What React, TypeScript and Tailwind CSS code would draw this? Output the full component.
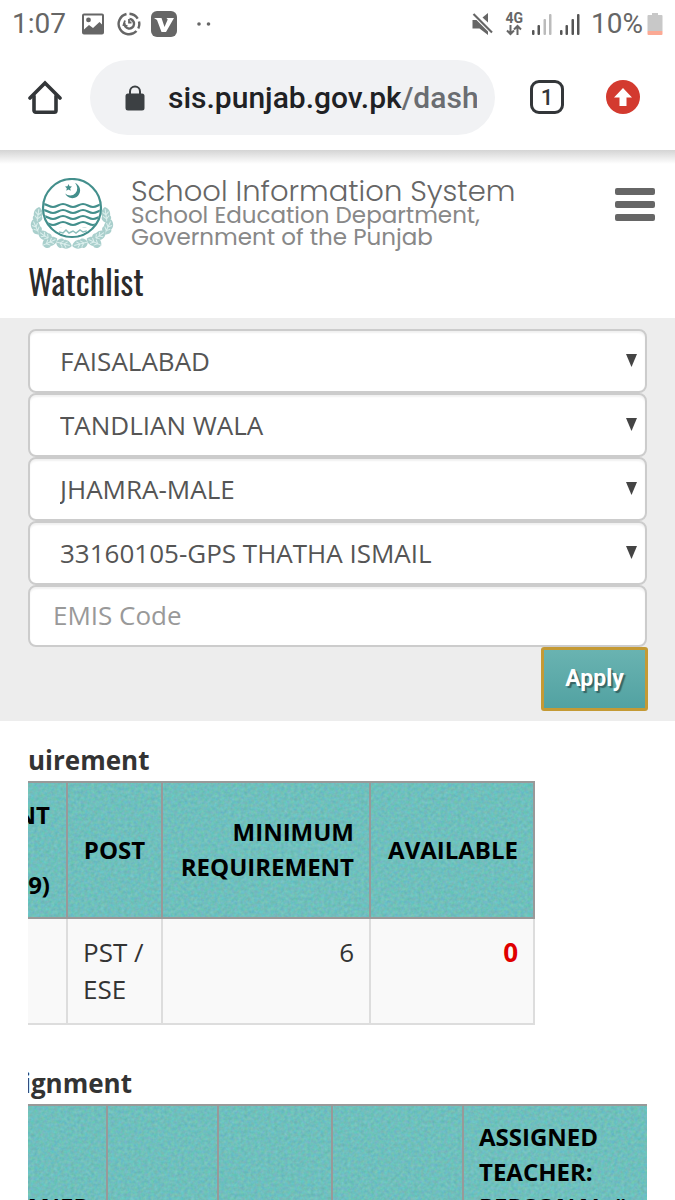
import { useId } from 'react'

const filters = [
  { label: 'District', value: 'FAISALABAD' },
  { label: 'Tehsil', value: 'TANDLIAN WALA' },
  { label: 'Markaz', value: 'JHAMRA-MALE' },
  { label: 'School', value: '33160105-GPS THATHA ISMAIL' },
]

function ImageIcon() {
  return (
    <svg className="h-6 w-6" viewBox="0 0 24 24" fill="#666">
      <path
        fillRule="evenodd"
        d="M3 1.500h18a2 2 0 0 1 2 2v17a2 2 0 0 1-2 2H3a2 2 0 0 1-2-2v-17a2 2 0 0 1 2-2zM3 3.500v14l5-4.500 4 3 6.500-6 2.500 2.500V3.500zM7.500 5.500a2.400 2.400 0 1 1 0 4.800 2.400 2.400 0 0 1 0-4.800z"
      />
    </svg>
  )
}

function SpiralIcon() {
  return (
    <svg className="h-6 w-6" viewBox="0 0 24 24" fill="none" stroke="#666" strokeWidth="2.400">
      <path d="M9.500 2A10.300 10.300 0 1 0 19.500 19" />
      <path d="M21.300 16.500A10.300 10.300 0 0 0 22 9.500" />
      <path d="M12.500 1.700a10.300 10.300 0 0 1 8.200 5" />
      <path d="M7.500 11a4.800 4.800 0 1 0 5-4" />
      <path d="M8 8.500l-1.500 4.500 4 1" strokeWidth="1.800" />
      <path d="M12 7v3.500h2.500" strokeWidth="1.800" />
    </svg>
  )
}

function VIcon() {
  return (
    <svg className="h-7 w-7" viewBox="0 0 28 28">
      <rect x="1" y="1" width="26" height="26" rx="6" fill="#666" />
      <path d="M4 8h7.500l3 9 3.200-7.500L16.500 8H24l-8 14h-4.500L7 10z" fill="#fff" />
    </svg>
  )
}

function MuteIcon() {
  return (
    <svg className="h-6 w-6" viewBox="0 0 24 24" fill="#666">
      <path d="M1.500 8h4l11.500 11.500V23l-8.500-6.500h-7z" />
      <path d="M17 1v9.500L11.500 5.500z" />
      <path d="M2.500 2l18.500 18.500" stroke="#666" strokeWidth="2.200" />
    </svg>
  )
}

function NetworkIcon() {
  return (
    <div className="flex flex-col items-center font-['Roboto'] text-[14px] leading-3 font-bold text-[#666]">
      4G
      <svg className="h-3 w-4" viewBox="0 0 16 12" fill="none" stroke="#666" strokeWidth="2">
        <path d="M4.500 1v8M1 6.500l3.500 3.500L8 6.500M11.500 11V3M8 5.500L11.500 2 15 5.500" />
      </svg>
    </div>
  )
}

function SignalIcon({ weak = false }: { weak?: boolean }) {
  return (
    <svg className="h-6 w-[22px]" viewBox="0 0 22 24" fill="#555">
      <rect x="1" y="18" width="2.500" height="5" rx="1" />
      <rect x="6.500" y="13" width="2.500" height="10" rx="1" />
      <rect x="12.500" y="7" width="2.500" height="16" rx="1" fill={weak ? '#bbb' : '#555'} />
      <rect x="18" y="2" width="2.500" height="21" rx="1" fill={weak ? '#bbb' : '#555'} />
    </svg>
  )
}

function BatteryIcon() {
  return (
    <svg className="h-6 w-4" viewBox="0 0 16 24">
      <path d="M5 1h6v2h3.500a1 1 0 0 1 1 1v15H.500V4a1 1 0 0 1 1-1H5z" fill="#c8c8c8" />
      <path d="M.500 19h15v3a1 1 0 0 1-1 1h-13a1 1 0 0 1-1-1z" fill="#fba994" />
    </svg>
  )
}

function StatusBar() {
  return (
    <div className="flex h-12 items-center justify-between pr-3 pl-3">
      <div className="flex items-center">
        <span className="w-[69px] font-['Roboto'] text-[28px] leading-8 text-[#666]">1:07</span>
        <ImageIcon />
        <span className="ml-3"><SpiralIcon /></span>
        <span className="ml-[9px]"><VIcon /></span>
        <svg className="ml-4 h-2 w-6" viewBox="0 0 24 8" fill="#666">
          <circle cx="5" cy="4" r="1.800" />
          <circle cx="14.500" cy="4" r="1.800" />
        </svg>
      </div>
      <div className="flex items-center">
        <MuteIcon />
        <span className="mr-2 ml-[10px]"><NetworkIcon /></span>
        <SignalIcon weak />
        <span className="ml-[6px]"><SignalIcon /></span>
        <span className="mr-1 ml-[10px] font-['Roboto'] text-[28px] leading-8 text-[#666]">10%</span>
        <BatteryIcon />
      </div>
    </div>
  )
}

function BrowserBar() {
  return (
    <div className="flex h-[102px] items-start pt-3 pr-[35px] pl-7">
      <button aria-label="Home" className="mt-5 h-9 w-[34px]">
        <svg viewBox="0 0 34 36" fill="none" stroke="#333639" strokeWidth="3.600" strokeLinejoin="round" strokeLinecap="round">
          <path d="M2 18L17 3l15 15" strokeLinejoin="miter" />
          <path d="M6 16v14.500a1.700 1.700 0 0 0 1.700 1.700h18.600a1.700 1.700 0 0 0 1.700-1.700V16" />
        </svg>
      </button>
      <div className="ml-7 flex h-[75px] flex-1 items-center rounded-full bg-[#f1f2f4] pr-[18px] pl-[34px]">
        <svg className="h-[26px] w-[22px] shrink-0" viewBox="0 0 22 26">
          <path d="M6 11V6.500a5 5 0 0 1 10 0V11" fill="none" stroke="#3c4043" strokeWidth="2" />
          <rect x="1.500" y="8.500" width="19" height="17" rx="2.500" fill="#3c4043" />
        </svg>
        <div className="ml-[22px] w-0 flex-1 overflow-hidden font-['Roboto'] text-[30px] font-medium whitespace-nowrap text-[#202124]">
          sis.punjab.gov.pk<span className="text-[#6a6d71]">/dash</span>
        </div>
      </div>
      <button aria-label="Tabs" className="mt-5 ml-[35px] flex h-[34px] w-[34px] items-center justify-center rounded-[9px] border-[3px] border-[#333639] font-['Roboto'] text-[22px] font-medium text-[#333639]">
        1
      </button>
      <button aria-label="Update" className="mt-5 ml-[42px] h-[34px] w-[34px]">
        <svg viewBox="0 0 34 34">
          <circle cx="17" cy="17" r="17" fill="#d33a2f" />
          <path d="M17 8l9 9.500h-5.500V26h-7v-8.500H8z" fill="#fff" />
        </svg>
      </button>
    </div>
  )
}

function Leaf({ x, y, angle }: { x: number; y: number; angle: number }) {
  return (
    <g transform={`translate(${x} ${y}) rotate(${angle})`}>
      <path d="M0-8C4-6 5-2 4 1 6 3 4 7 0 8-4 7-6 3-4 1-5-2-4-6 0-8z" fill="#a9cfcc" />
      <path d="M0-6V8M0 0l3-3M0 0l-3-3M0 4l3-3M0 4l-3-3" stroke="#dcefed" strokeWidth="1" fill="none" />
    </g>
  )
}

function Emblem() {
  const leaves = [
    { x: 8, y: 37, angle: 8 },
    { x: 6, y: 49, angle: -25 },
    { x: 15, y: 58, angle: -55 },
    { x: 20, y: 64, angle: 65 },
    { x: 34, y: 66, angle: 105 },
  ]
  const waves = [29, 35, 41, 47, 53]
  return (
    <svg className="h-[72px] w-[84px] shrink-0" viewBox="0 0 84 72">
      {leaves.map((leaf, index) => (
        <g key={index}>
          <Leaf {...leaf} />
          <Leaf x={84 - leaf.x} y={leaf.y} angle={-leaf.angle} />
        </g>
      ))}
      <circle cx="42" cy="30" r="29" fill="#fff" stroke="#438f8c" strokeWidth="2.200" />
      <clipPath id="emblem-disc">
        <circle cx="42" cy="30" r="28" />
      </clipPath>
      <g clipPath="url(#emblem-disc)" fill="none" stroke="#438f8c" strokeWidth="2.200">
        {waves.map((y, index) => (
          <path key={index} d={`M3 ${y}c5 0 6-3 10-3s6 3 10 3 6-3 10-3 6 3 10 3 6-3 10-3 6 3 10 3 6-3 10-3 6 3 10 3`} />
        ))}
        <path d="M13 53q29-9 58 0v10H13z" fill="#fff" stroke="none" />
        <path d="M29 54l4 1 3-3 3 3 4-2 3 2 4-3 3 2 4-1" stroke="#8dbfbc" strokeWidth="1.500" />
      </g>
      <path d="M45 5a7.800 7.800 0 1 1-9.800 10.500A6.800 6.800 0 0 0 45 5z" fill="#438f8c" />
      <path d="M38.500 6l1 2.200 2.500.3-1.800 1.700.5 2.500-2.200-1.200-2.200 1.200.5-2.500-1.800-1.700 2.500-.3z" fill="#438f8c" />
    </svg>
  )
}

function SiteHeader() {
  return (
    <header className="px-7">
      <div className="flex items-start pt-7">
        <div className="flex flex-1 items-start pl-[2px]">
          <Emblem />
          <div className="ml-[17px] font-['Poppins','Montserrat','DejaVu_Sans',sans-serif] whitespace-nowrap">
            <div className="text-[29px] leading-[26px] font-light text-[#666]">School Information System</div>
            <div className="text-[23px] leading-[22px] text-[#888]">School Education Department,</div>
            <div className="text-[23px] leading-[22px] text-[#888]">Government of the Punjab</div>
          </div>
        </div>
        <button aria-label="Menu" className="-mr-2 flex w-10 flex-col gap-[6px] pt-[10px]">
          <span className="h-[7px] w-full rounded-[2px] bg-[#666]" />
          <span className="h-[7px] w-full rounded-[2px] bg-[#666]" />
          <span className="h-[7px] w-full rounded-[2px] bg-[#666]" />
        </button>
      </div>
      <h1 className="pt-2 pb-[14px] font-['Oswald','Roboto',sans-serif] text-[34px] leading-[46px] text-[#2b2b2b]">Watchlist</h1>
    </header>
  )
}

function FilterForm() {
  return (
    <form className="bg-[#ededed] px-7 pt-[11px] pb-[10px] font-['Open_Sans'] text-[26px]" onSubmit={(e) => e.preventDefault()}>
      {filters.map((filter) => (
        <div key={filter.label} className="relative">
          <select
            aria-label={filter.label}
            defaultValue={filter.value}
            className="block h-16 w-full appearance-none rounded-lg border-2 border-[#ccc] bg-white pr-12 pl-[30px] text-[#555] shadow-[inset_0_2px_2px_rgba(0,0,0,0.06)]"
          >
            <option>{filter.value}</option>
          </select>
          <svg className="pointer-events-none absolute top-[25px] right-[9px] h-[13px] w-[13px]" viewBox="0 0 13 13" fill="#444">
            <path d="M1 0h11L6.500 13z" />
          </svg>
        </div>
      ))}
      <input
        aria-label="EMIS Code"
        placeholder="EMIS Code"
        className="block h-[62px] w-full rounded-lg border-2 border-[#ccc] bg-white px-[23px] pb-[2px] text-[#555] shadow-[inset_0_2px_2px_rgba(0,0,0,0.06)] placeholder:text-[#999]"
      />
      <div className="-mr-px flex justify-end">
        <button className="h-16 w-[107px] rounded-[3px] border-[3px] border-[#c49a35] bg-linear-to-b from-[#69b3b1] to-[#52a2a2] font-['Roboto'] text-[23px] font-bold text-white text-shadow-[2px_2px_1px_rgba(0,0,0,0.4)]">
          Apply
        </button>
      </div>
    </form>
  )
}

// grainy teal backdrop shared by the table heads
function Grain() {
  const id = useId()
  return (
    <svg className="absolute inset-0 h-full w-full" aria-hidden="true">
      <filter id={id} x="0" y="0" width="100%" height="100%" colorInterpolationFilters="sRGB">
        <feTurbulence type="fractalNoise" baseFrequency="0.3" numOctaves="2" />
        <feColorMatrix values="0.18 0 0 0 0.345  0 0.14 0 0 0.68  0 0 0.18 0 0.65  0 0 0 0 1" />
      </filter>
      <rect width="100%" height="100%" fill="#6fc0bc" />
      <rect width="100%" height="100%" filter={`url(#${id})`} />
    </svg>
  )
}

function RequirementTable() {
  return (
    <section className="overflow-hidden">
      <h2 className="text-[26px] leading-9 font-bold text-[#333]">uirement</h2>
      <div className="relative mt-[3px] w-fit">
        <Grain />
        <table className="relative border-collapse text-[24px] leading-[35px]">
          <thead className="text-black">
            <tr className="h-[136px] border-y-2 border-[#999]">
              <th className="w-[39px] max-w-[39px] border-r-2 border-[#999] pr-4 pb-[2px]">
                <div className="flex justify-end">NT</div>
                <div className="mt-[35px] flex justify-end">9)</div>
              </th>
              <th className="w-[95px] border-r-2 border-[#999] pb-[2px] text-center">POST</th>
              <th className="w-52 border-r-2 border-[#999] pr-[15px] pb-[2px] text-right">MINIMUM REQUIREMENT</th>
              <th className="w-[164px] border-r-2 border-[#999] pr-[15px] pb-[2px] text-right">AVAILABLE</th>
            </tr>
          </thead>
          <tbody className="bg-[#f9f9f9] text-[26px] leading-[37px] text-[#333]">
            <tr className="h-[106px] border-b-2 border-[#ddd] align-top">
              <td className="border-r-2 border-[#ddd]" />
              <td className="border-r-2 border-[#ddd] pt-[15px] pl-[15px]">PST / ESE</td>
              <td className="border-r-2 border-[#ddd] pt-[15px] pr-[15px] text-right">6</td>
              <td className="border-r-2 border-[#ddd] pt-[15px] pr-[15px] text-right font-bold text-[#e00000]">0</td>
            </tr>
          </tbody>
        </table>
      </div>
    </section>
  )
}

function AssignmentTable() {
  return (
    <section className="mt-10 overflow-hidden">
      <h2 className="-ml-[5px] text-[26px] leading-9 font-bold text-[#333]">ignment</h2>
      <div className="relative mt-[3px]">
        <Grain />
        <table className="relative w-full border-collapse text-left align-top text-[24px] leading-[35px] text-black">
          <thead>
            <tr className="border-t-2 border-[#999] align-top">
              <th className="w-[79px] border-r-2 border-[#999] pt-[83px] align-top">
                <div className="-ml-1">ANED</div>
              </th>
              <th className="w-[111px] border-r-2 border-[#999]" />
              <th className="w-[114px] border-r-2 border-[#999]" />
              <th className="w-[131px] border-r-2 border-[#999]" />
              <th className="pt-[13px] pl-[15px] align-top">
                ASSIGNED
                <br />
                TEACHER:
                <br />
                <span className="whitespace-nowrap">PERSONAL #</span>
              </th>
            </tr>
          </thead>
        </table>
      </div>
    </section>
  )
}

export default function App() {
  return (
    <div className="flex h-screen flex-col overflow-hidden bg-white">
      <StatusBar />
      <BrowserBar />
      <div className="flex-1 overflow-hidden">
        <div className="-mb-[14px] h-[14px] bg-linear-to-b from-[#d4d4d4] to-white" />
        <SiteHeader />
        <FilterForm />
        <main className="px-7 pt-[21px] font-['Open_Sans']">
          <RequirementTable />
          <AssignmentTable />
        </main>
      </div>
    </div>
  )
}
